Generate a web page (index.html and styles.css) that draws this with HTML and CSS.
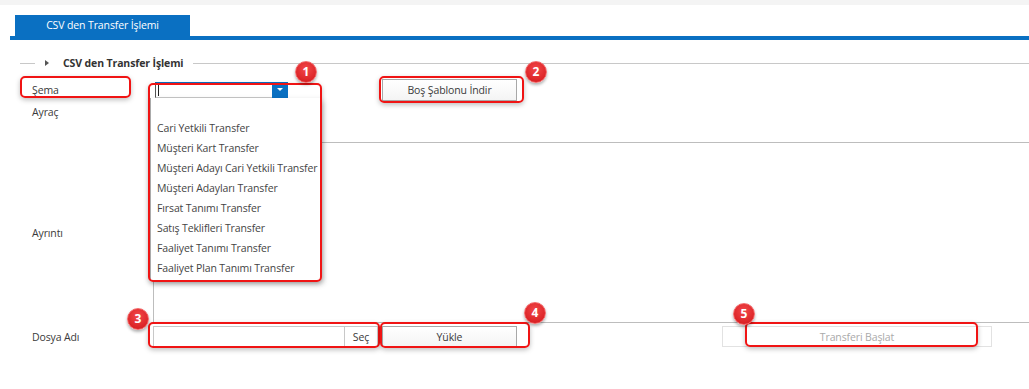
FILE: index.html
```html
<!DOCTYPE html>
<html lang="tr">

<head>
    <meta charset="UTF-8" />
    <meta name="viewport" content="width=device-width, initial-scale=1.0">
    <title>CSV den Transfer İşlemi</title>
    <link rel="stylesheet" href="styles.css">
</head>

<body>
    <div class="top-strip"></div>

    <div class="tab-bar">
        <div class="tab">CSV den Transfer İşlemi</div>
    </div>

    <div class="panel">
        <div class="legend">
            <span class="legend-line short"></span>
            <span class="legend-arrow"></span>
            <span class="legend-text">CSV den Transfer İşlemi</span>
            <span class="legend-line"></span>
        </div>

        <div class="form">
            <div class="row">
                <div class="label">Şema</div>
                <div class="field combo-field">
                    <div class="combo">
                        <span class="caret"></span>
                        <span class="combo-btn"></span>
                    </div>
                    <!-- açık liste -->
                    <ul class="combo-list">
                        <li>&nbsp;</li>
                        <li>Cari Yetkili Transfer</li>
                        <li>Müşteri Kart Transfer</li>
                        <li>Müşteri Adayı Cari Yetkili Transfer</li>
                        <li>Müşteri Adayları Transfer</li>
                        <li>Fırsat Tanımı Transfer</li>
                        <li>Satış Teklifleri Transfer</li>
                        <li>Faaliyet Tanımı Transfer</li>
                        <li>Faaliyet Plan Tanımı Transfer</li>
                    </ul>
                    <button class="btn btn-template">Boş Şablonu İndir</button>
                </div>
            </div>

            <div class="row">
                <div class="label">Ayraç</div>
                <div class="field"></div>
            </div>

            <div class="row row-detail">
                <div class="label">Ayrıntı</div>
                <div class="field">
                    <div class="textarea"></div>
                </div>
            </div>

            <div class="row row-file">
                <div class="label">Dosya Adı</div>
                <div class="field">
                    <div class="file-input">
                        <span class="file-name"></span>
                        <span class="file-btn">Seç</span>
                    </div>
                    <button class="btn btn-upload">Yükle</button>
                    <button class="btn btn-start" disabled>Transferi Başlat</button>
                </div>
            </div>
        </div>
    </div>

    <!-- ekran görüntüsü işaretleri -->
    <div class="mark" style="left:20px; top:76px; width:111px; height:22px;"></div>
    <div class="mark" style="left:148px; top:83px; width:174px; height:199px;"></div>
    <div class="mark" style="left:379px; top:76px; width:145px; height:27px;"></div>
    <div class="mark" style="left:148px; top:322px; width:232px; height:26px;"></div>
    <div class="mark" style="left:380px; top:322px; width:150px; height:26px;"></div>
    <div class="mark" style="left:745px; top:322px; width:233px; height:25px;"></div>

    <div class="badge" style="left:295px; top:61px;">1</div>
    <div class="badge" style="left:525px; top:61px;">2</div>
    <div class="badge" style="left:127px; top:308px;">3</div>
    <div class="badge" style="left:524px; top:302px;">4</div>
    <div class="badge" style="left:733px; top:303px;">5</div>
</body>

</html>
```

FILE: styles.css
```css
body {
    margin: 0;
    font-family: 'Open Sans', 'Noto Sans', 'DejaVu Sans', sans-serif;
    font-size: 10.5px;
    letter-spacing: -0.12px;
    color: #3a3a3a;
    background: #fff;
    overflow: hidden;
    position: relative;
    height: 389px;
}

.top-strip {
    height: 5px;
    background: #f4f4f4;
}

.tab-bar {
    margin: 10px 0 0 10px;
    border-bottom: 4px solid #0a70c2;
    display: flex;
}

.tab {
    margin-left: 5px;
    width: 175px;
    height: 21px;
    line-height: 21px;
    background: #0a70c2;
    color: #fff;
    text-align: center;
}

.panel {
    padding-left: 20px;
}

.legend {
    display: flex;
    align-items: center;
    height: 14px;
    margin-top: 16px;
}

.legend-line {
    flex: 1;
    height: 1px;
    background: #c8c8c8;
}

.legend-line.short {
    flex: none;
    width: 15px;
}

.legend-arrow {
    width: 0;
    height: 0;
    margin: 0 14px 0 10px;
    border-top: 3.5px solid transparent;
    border-bottom: 3.5px solid transparent;
    border-left: 4px solid #555;
}

.legend-text {
    font-weight: 700;
    color: #333;
    margin-right: 10px;
}

.form {
    padding-left: 12px;
    margin-top: 9px;
}

.row {
    display: flex;
    align-items: center;
    height: 22px;
}

.label {
    width: 121px;
    flex: none;
}

.field {
    display: flex;
    align-items: center;
    flex: none;
}

.combo-field {
    position: relative;
}

.combo {
    margin-left: 2px;
    width: 133px;
    height: 16px;
    box-sizing: border-box;
    border: 1px solid #c8c8c8;
    border-top-color: #0a70c2;
    border-left-color: #555;
    background: #fff;
    display: flex;
    align-items: center;
    justify-content: space-between;
}

.caret {
    width: 1px;
    height: 11px;
    margin-left: 2px;
    background: #222;
}

.combo-btn {
    width: 16px;
    height: 16px;
    margin: -1px -1px -1px 0;
    background: #0a70c2;
    position: relative;
}

.combo-btn::after {
    content: "";
    position: absolute;
    left: 5px;
    top: 6px;
    border-left: 3px solid transparent;
    border-right: 3px solid transparent;
    border-top: 3px solid #fff;
}

.combo-list {
    position: absolute;
    left: -3px;
    top: 19px;
    width: 170px;
    margin: 0;
    padding: 0 0 2px 0;
    list-style: none;
    background: #fff;
    border-left: 1px solid #aaa;
    box-shadow: 2px 3px 6px rgba(0, 0, 0, 0.25);
    z-index: 2;
}

.combo-list li {
    height: 20px;
    line-height: 21px;
    padding-left: 6px;
    white-space: nowrap;
    color: #444;
}

.btn {
    font-family: inherit;
    font-size: 10.5px;
    letter-spacing: -0.12px;
    color: #3a3a3a;
    height: 22px;
    box-sizing: border-box;
    border: 1px solid #a8a8a8;
    background: linear-gradient(#fff, #f4f4f4);
    padding: 0;
}

.btn-template {
    margin-left: 94px;
    width: 135px;
}

.row-detail {
    height: 181px;
    margin-top: 19px;
}

.textarea {
    width: 900px;
    height: 181px;
    box-sizing: border-box;
    border: 1px solid #bdbdbd;
    background: #fff;
}

.row-file {
    height: 21px;
    margin-top: 3px;
}

.file-input {
    width: 225px;
    height: 21px;
    box-sizing: border-box;
    border: 1px solid #c8c8c8;
    display: flex;
}

.file-name {
    flex: 1;
}

.file-btn {
    width: 32px;
    border-left: 1px solid #c8c8c8;
    text-align: center;
    line-height: 20px;
}

.btn-upload {
    margin-left: 4px;
    width: 135px;
    height: 21px;
}

.btn-start {
    margin-left: 205px;
    width: 270px;
    height: 21px;
    border-color: #e2e2e2;
    background: #fff;
    color: #aaa;
}

.mark {
    position: absolute;
    box-sizing: border-box;
    border: 2px solid #f01414;
    border-radius: 5px;
    box-shadow: 0 2px 5px rgba(0, 0, 0, 0.25);
    z-index: 3;
}

.badge {
    position: absolute;
    width: 22px;
    height: 22px;
    box-sizing: border-box;
    border-radius: 50%;
    background: radial-gradient(circle at 50% 35%, #f2484a 0%, #dc2427 70%, #c51d20 100%);
    border: 1px solid #f36a6b;
    box-shadow: 0 2px 3px rgba(0, 0, 0, 0.3);
    color: #fff;
    font-weight: 700;
    font-size: 12px;
    line-height: 20px;
    letter-spacing: 0;
    text-align: center;
    z-index: 4;
}
```
